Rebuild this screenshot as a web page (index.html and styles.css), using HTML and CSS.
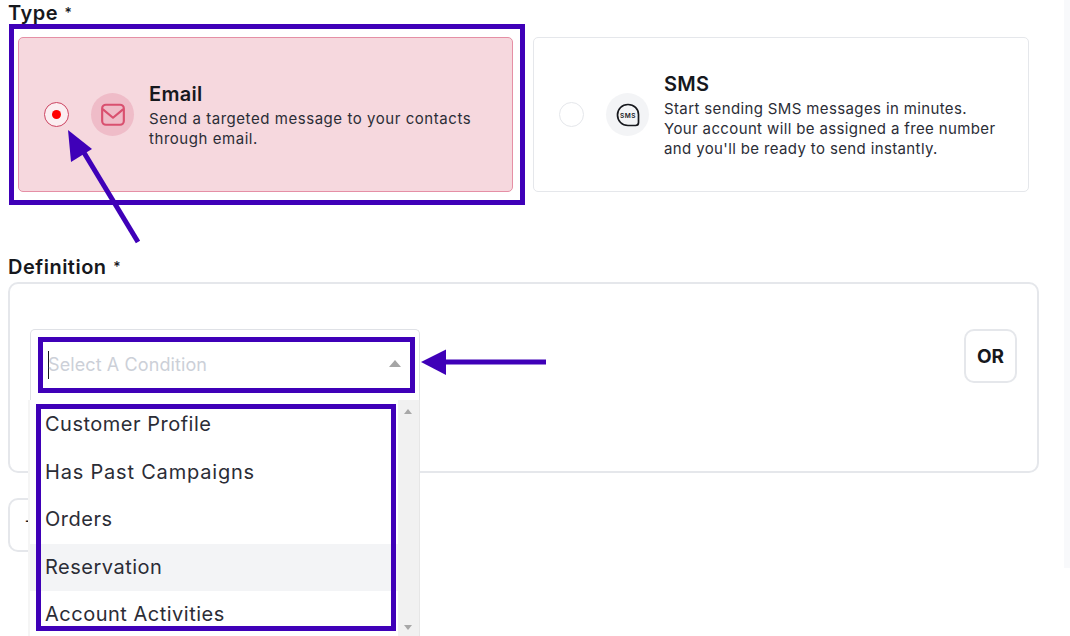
FILE: index.html
```html
<!DOCTYPE html>
<html lang="en">
<head>
  <meta charset="UTF-8">
  <title>Create Segment</title>
  <link rel="stylesheet" href="styles.css">
</head>
<body>
  <div class="page">
    <main class="form">
      <h2 class="field-label">Type <span class="req">*</span></h2>
      <div class="type-row">
        <div class="type-card selected">
          <span class="radio"><span class="radio-dot"></span></span>
          <span class="type-icon">
            <svg width="26" height="26" viewBox="0 0 24 24" fill="none" stroke="#d9506f" stroke-width="2" stroke-linejoin="round" stroke-linecap="round">
              <rect x="2" y="2.500" width="20" height="18.500" rx="3.500"></rect>
              <path d="M3 7l9 7.500 9-7.500"></path>
            </svg>
          </span>
          <div class="type-text">
            <h3>Email</h3>
            <p>Send a targeted message to your contacts through email.</p>
          </div>
        </div>
        <div class="type-card">
          <span class="radio"></span>
          <span class="type-icon">
            <svg width="24" height="24" viewBox="0 0 24 24" fill="none" stroke="#16181d" stroke-width="1.700">
              <path d="M12 1.500c6 0 10.500 4.300 10.500 10v8c0 1.700-1.200 3-3 3H12C6 22.500 1.500 18 1.500 12S6 1.500 12 1.500z"></path>
              <text x="12" y="14.500" text-anchor="middle" class="sms-text">SMS</text>
            </svg>
          </span>
          <div class="type-text">
            <h3>SMS</h3>
            <p class="sms-desc">Start sending SMS messages in minutes.<br>Your account will be assigned a free number<br>and you'll be ready to send instantly.</p>
          </div>
        </div>
      </div>

      <h2 class="field-label def-label">Definition <span class="req">*</span></h2>
      <div class="definition">
        <div class="condition">
          <div class="select-box">
            <span class="caret"></span>
            <span class="placeholder">Select A Condition</span>
            <span class="select-arrow"></span>
          </div>
        </div>
        <button class="or-btn">OR</button>
      </div>
      <button class="add-btn">+</button>
    </main>
    <div class="gutter"></div>
  </div>

  <!-- dropdown sits over the definition box -->
  <ul class="dropdown">
    <li>Customer Profile</li>
    <li class="wide">Has Past Campaigns</li>
    <li>Orders</li>
    <li class="hover">Reservation</li>
    <li>Account Activities</li>
    <li class="scrollbar"><span class="sb-up"></span><span class="sb-down"></span></li>
  </ul>

  <!-- annotations drawn on top of the screenshot -->
  <div class="mark mark-card"></div>
  <div class="mark mark-select"></div>
  <div class="mark mark-list"></div>
  <svg class="arrows" width="1070" height="636" viewBox="0 0 1070 636">
    <path d="M138 242L80 146" stroke="#3f00b8" stroke-width="5" fill="none"></path>
    <path d="M68 130L92 149 71 162z" fill="#3f00b8"></path>
    <path d="M546 362H444" stroke="#3f00b8" stroke-width="5" fill="none"></path>
    <path d="M421 362L446 349.500V375z" fill="#3f00b8"></path>
  </svg>
</body>
</html>
```

FILE: styles.css
```css
* {
  box-sizing: border-box;
}
html, body {
  margin: 0;
  height: 636px;
  overflow: hidden;
}
body {
  font-family: Inter, "Noto Sans", sans-serif;
  color: #16181d;
  background-color: #ffffff;
  position: relative;
}
.page {
  display: flex;
  height: 636px;
  align-items: flex-start;
}
.form {
  width: 1064px;
  padding: 0 25px 0 8px;
}
.gutter {
  width: 6px;
  height: 568px;
  background-color: #f8f9fb;
}
.field-label {
  margin: 0;
  height: 25px;
  font-size: 20px;
  line-height: 25px;
  font-weight: 600;
  letter-spacing: 0.5px;
}
.req {
  font-size: 14px;
  font-weight: 500;
  vertical-align: 2px;
  margin-left: 1px;
}
.type-row {
  display: flex;
  gap: 20px;
  margin-top: 12px;
  padding-left: 10px;
}
.type-card {
  width: 496px;
  height: 155px;
  display: flex;
  align-items: center;
  padding-left: 25px;
  border: 1px solid #e5e7eb;
  border-radius: 5px;
}
.type-card.selected {
  width: 495px;
  background-color: #f6d8de;
  border-color: #e58fa5;
}
.radio {
  flex: none;
  width: 25px;
  height: 25px;
  border: 1px solid #e5e7eb;
  border-radius: 50%;
  background-color: #ffffff;
  display: flex;
  align-items: center;
  justify-content: center;
}
.selected .radio {
  background-color: #fbeef1;
  border-color: #cc4461;
}
.radio-dot {
  width: 9px;
  height: 9px;
  border-radius: 50%;
  background-color: #ff0000;
}
.type-icon {
  flex: none;
  width: 43px;
  height: 43px;
  margin-left: 22px;
  border-radius: 50%;
  background-color: #f3f4f6;
  display: flex;
  align-items: center;
  justify-content: center;
}
.selected .type-icon {
  background-color: #efbcc8;
}
.sms-text {
  font-size: 6.500px;
  font-weight: 600;
  letter-spacing: 0.5px;
  fill: #16181d;
  stroke: none;
}
.type-text {
  margin-left: 15px;
  width: 345px;
}
.type-text h3 {
  margin: 0;
  font-size: 20px;
  line-height: 29px;
  font-weight: 600;
  letter-spacing: 0.3px;
}
.type-text p {
  margin: 0;
  font-size: 15px;
  line-height: 20px;
  letter-spacing: 0.55px;
  color: #2b2d36;
}
.type-text p.sms-desc {
  letter-spacing: 0.37px;
  white-space: nowrap;
}
.def-label {
  margin-top: 62px;
}
.definition {
  position: relative;
  display: flex;
  justify-content: space-between;
  align-items: flex-start;
  height: 191px;
  margin-top: 3px;
  padding: 45px 20px 0 20px;
  border: 2px solid #e5e7eb;
  border-radius: 10px;
}
.condition {
  width: 390px;
  height: 72px;
  padding: 10px 5px;
  border: 1px solid #dfe1e6;
  border-bottom: none;
  border-radius: 5px 5px 0 0;
  background-color: #ffffff;
}
.select-box {
  display: flex;
  align-items: center;
  height: 50px;
  padding: 0 13px 0 12px;
}
.caret {
  width: 1px;
  height: 28px;
  background-color: #16181d;
}
.placeholder {
  flex: 1;
  margin: -2px 0 0 -1px;
  font-size: 18px;
  letter-spacing: 0.1px;
  color: #ccd0d8;
}
.select-arrow {
  margin-top: -3px;
  border-left: 6.500px solid transparent;
  border-right: 6.500px solid transparent;
  border-bottom: 7px solid #a5a5a5;
}
.or-btn {
  width: 53px;
  height: 54px;
  padding: 0;
  font-family: inherit;
  font-size: 19px;
  font-weight: 700;
  color: #16181d;
  background-color: #ffffff;
  border: 2px solid #e5e7eb;
  border-radius: 10px;
}
.add-btn {
  display: block;
  width: 130px;
  height: 54px;
  margin-top: 25px;
  padding: 0 0 10px 14px;
  text-align: left;
  font-family: inherit;
  font-size: 20px;
  color: #16181d;
  background-color: #ffffff;
  border: 2px solid #e5e7eb;
  border-radius: 10px;
}
.dropdown {
  position: absolute;
  left: 28px;
  top: 400px;
  width: 392px;
  height: 236px;
  margin: 0;
  padding: 1px 0 0;
  list-style: none;
  overflow: hidden;
  background-color: #ffffff;
  border-right: 1px solid #e6e6e6;
  border-left: 2px solid #f5f5f5;
  font-size: 20px;
  letter-spacing: 0.5px;
  color: #2b2d36;
}
.dropdown li {
  height: 47.500px;
  line-height: 47.500px;
  padding-left: 15px;
}
.dropdown li.wide {
  letter-spacing: 0.8px;
}
.dropdown li.hover {
  background-color: #f3f4f6;
}
.dropdown li.scrollbar {
  position: absolute;
  right: 0;
  top: 0;
  width: 21px;
  height: 100%;
  padding: 0;
  background-color: #f1f1f1;
}
.sb-up, .sb-down {
  position: absolute;
  left: 6px;
  border-left: 4px solid transparent;
  border-right: 4px solid transparent;
}
.sb-up {
  top: 9px;
  border-bottom: 5px solid #a8a8a8;
}
.sb-down {
  bottom: 6px;
  border-top: 5px solid #a8a8a8;
}
.mark {
  position: absolute;
  border: 5px solid #3f00b8;
}
.mark-card {
  left: 9px;
  top: 24px;
  width: 516px;
  height: 181px;
}
.mark-select {
  left: 38px;
  top: 337px;
  width: 377px;
  height: 56px;
}
.mark-list {
  left: 36px;
  top: 404px;
  width: 360px;
  height: 227px;
}
.arrows {
  position: absolute;
  left: 0;
  top: 0;
}
```
